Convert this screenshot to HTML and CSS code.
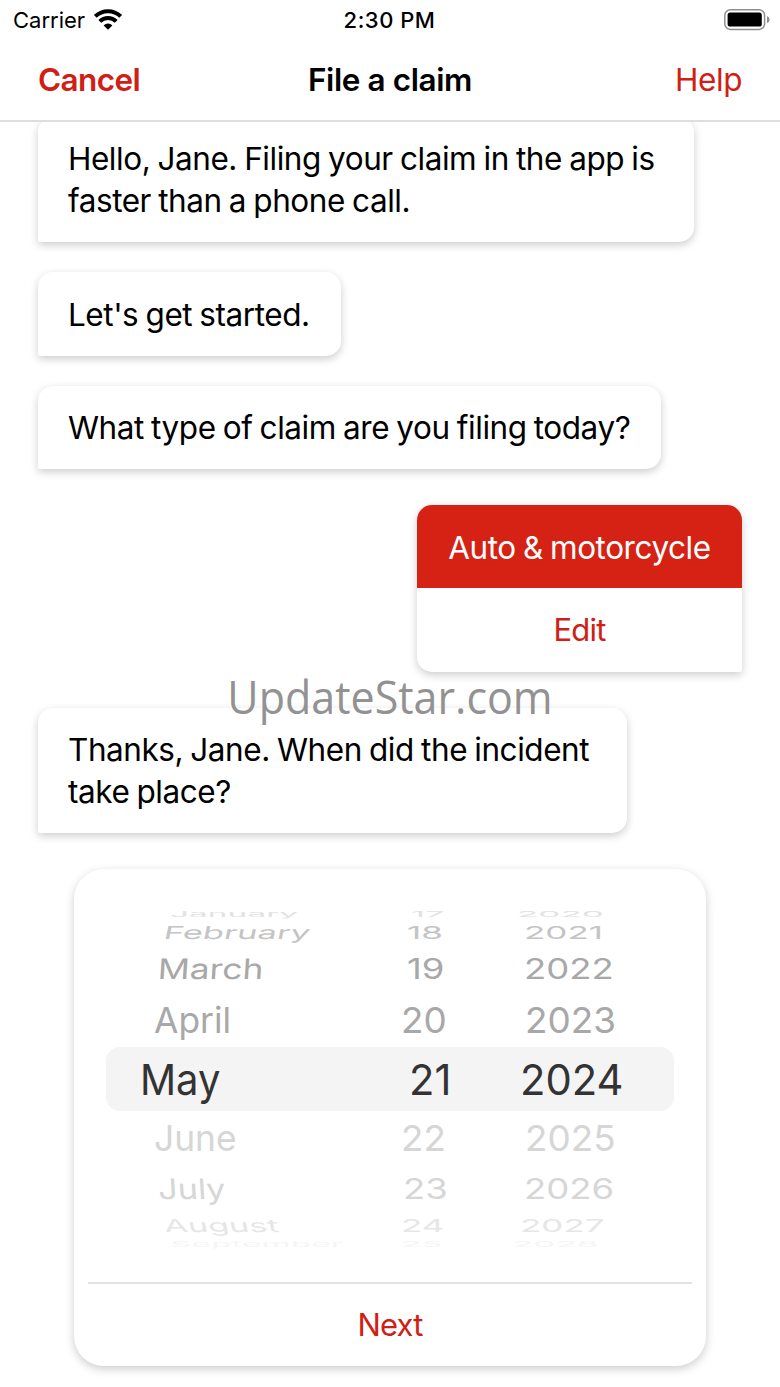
FILE: index.html
```html
<!DOCTYPE html>
<html lang="en">
  <head>
    <meta charset="utf-8">
    <title>File a claim</title>
    <link rel="stylesheet" href="styles.css">
  </head>
  <body>
    <header class="header">
      <div class="status-bar">
        <div class="carrier">
          <span>Carrier</span>
          <svg width="28" height="22" viewBox="0 0 28 22" fill="none" stroke="#000" stroke-width="4">
            <path d="M1.3 7.4A18 18 0 0 1 26.7 7.4" />
            <path d="M5.8 12.4A11.6 11.6 0 0 1 22.2 12.4" />
            <path d="M14 20.8l-4.4-4.4a6.2 6.2 0 0 1 8.8 0z" fill="#000" stroke="none" />
          </svg>
        </div>
        <div class="time">2:30 PM</div>
        <svg class="battery" width="46" height="22" viewBox="0 0 46 22">
          <rect x="0.8" y="0.8" width="39.8" height="19.6" rx="5.5" fill="#fff" stroke="#8e8e8e" stroke-width="1.5" />
          <rect x="3.6" y="3.6" width="34.2" height="14" rx="2.6" />
          <path d="M43 7q2.6 1 2.6 3.6T43 14.2z" fill="#8e8e8e" />
        </svg>
      </div>
      <nav class="nav">
        <a class="cancel">Cancel</a>
        <h1>File a claim</h1>
        <a class="help">Help</a>
      </nav>
    </header>

    <main class="chat">
      <div class="bubble greeting">Hello, Jane. Filing your claim in the app is faster than a phone call.</div>
      <div class="bubble">Let's get started.</div>
      <div class="bubble">What type of claim are you filing today?</div>

      <div class="answer">
        <div class="answer-text">Auto &amp; motorcycle</div>
        <a class="edit">Edit</a>
      </div>

      <div class="bubble question">Thanks, Jane. When did the incident take place?</div>

      <div class="picker">
        <div class="wheel">
          <div class="row up4"><span>January</span><span>17</span><span>2020</span></div>
          <div class="row up3"><span>February</span><span>18</span><span>2021</span></div>
          <div class="row up2"><span>March</span><span>19</span><span>2022</span></div>
          <div class="row up1"><span>April</span><span>20</span><span>2023</span></div>
          <div class="row selected"><span>May</span><span>21</span><span>2024</span></div>
          <div class="row down1"><span>June</span><span>22</span><span>2025</span></div>
          <div class="row down2"><span>July</span><span>23</span><span>2026</span></div>
          <div class="row down3"><span>August</span><span>24</span><span>2027</span></div>
          <div class="row down4"><span>September</span><span>25</span><span>2028</span></div>
        </div>
        <a class="next">Next</a>
      </div>
    </main>

    <div class="watermark">UpdateStar.com</div>
  </body>
</html>
```
FILE: styles.css
```css
* {
  box-sizing: border-box;
}

body {
  position: relative;
  width: 780px;
  height: 1387px;
  margin: 0;
  overflow: hidden;
  background-color: #fff;
  color: #000;
  font-family: Inter, "Liberation Sans", sans-serif;
  font-size: 31.5px;
  letter-spacing: -0.45px;
  word-spacing: -1.2px;
}

.header {
  position: relative;
  z-index: 1;
  height: 122px;
  border-bottom: 2px solid #dedede;
  background-color: #fff;
}

.status-bar {
  display: grid;
  grid-template-columns: 1fr auto 1fr;
  align-items: center;
  height: 39px;
  padding: 0 10px 0 13px;
  font-size: 22px;
  letter-spacing: 0;
  word-spacing: 0;
}

.carrier {
  display: flex;
  align-items: center;
  gap: 9px;
}

.time {
  margin-right: 4px;
  font-weight: 500;
  letter-spacing: 0.5px;
}

.battery {
  justify-self: end;
}

.nav {
  display: grid;
  grid-template-columns: 1fr auto 1fr;
  align-items: center;
  height: 80px;
  padding: 0 38px;
}

.nav h1 {
  margin: 0;
  font-size: 31.5px;
  font-weight: 600;
  letter-spacing: -0.4px;
  word-spacing: 0;
}

.cancel,
.help,
.edit,
.next {
  color: #d02015;
}

.cancel {
  font-weight: 600;
  letter-spacing: -0.6px;
}

.help {
  text-align: right;
}

.edit,
.next {
  display: block;
  font-size: 31px;
  letter-spacing: -0.8px;
}

.chat {
  display: flex;
  flex-direction: column;
  align-items: flex-start;
  margin-top: -5.5px;
  padding: 0 38px;
}

.bubble {
  margin-bottom: 30px;
  padding: 21.5px 31px 20px 30px;
  border-radius: 15px 15px 15px 2px;
  background-color: #fff;
  box-shadow: 0 3px 8px rgba(0, 0, 0, 0.2);
  line-height: 42px;
}

.greeting {
  width: 656px;
}

.question {
  width: 589px;
}

.answer {
  align-self: flex-end;
  width: 325px;
  margin: 6px 0 36px;
  border-radius: 15px 15px 2px 15px;
  overflow: hidden;
  background-color: #fff;
  box-shadow: 0 3px 8px rgba(0, 0, 0, 0.2);
  line-height: 83.25px;
  text-align: center;
}

.answer-text {
  padding-top: 1px;
  height: 83.25px;
  background-color: #d62214;
  color: #fff;
}

.picker {
  align-self: center;
  width: 632px;
  height: 497px;
  margin-top: 6px;
  padding: 40px 14px 0;
  border-radius: 30px;
  background-color: #fff;
  box-shadow: 0 3px 10px rgba(0, 0, 0, 0.2);
}

.wheel {
  height: 375px;
  border-bottom: 2px solid #e2e2e2;
  letter-spacing: 0;
}

.row {
  display: grid;
  margin: 0 18px;
  font-size: 38px;
}

.row span {
  justify-self: start;
  transform: scale(var(--sx, 0.97), var(--sy, 1)) skewX(var(--skew, 0deg));
  transform-origin: left center;
}

.row span:first-child {
  --sx: 0.93;
}

.selected {
  grid-template-columns: 269px 111px 1fr;
  padding-left: 34px;
  border-radius: 14px;
  background-color: #f4f4f4;
  color: #333;
  font-size: 43px;
  line-height: 64px;
}

.up1,
.down1 {
  --sy: 0.94;
  grid-template-columns: 247px 124px 1fr;
  padding-left: 48px;
  line-height: 54px;
}

.up2,
.down2 {
  --sy: 0.74;
  --sx: 0.96;
  grid-template-columns: 245px 121px 1fr;
  padding-left: 52px;
  line-height: 48px;
}

.up2 {
  grid-template-columns: 249px 117px 1fr;
}

.up2 span:first-child {
  --skew: -3deg;
}

.down2 span:first-child {
  --sx: 0.9;
  --skew: 3deg;
}

.up3,
.down3 {
  --sy: 0.47;
  --sx: 0.92;
  grid-template-columns: 243px 117px 1fr;
  padding-left: 58px;
}

.up3 span:first-child {
  --sx: 0.91;
  --skew: -6deg;
}

.down3 {
  grid-template-columns: 237px 119px 1fr;
}

.down3 span:first-child {
  --sx: 0.9;
  --skew: 6deg;
}

.up4,
.down4 {
  --sy: 0.2;
  --sx: 0.92;
  grid-template-columns: 241px 106px 1fr;
  padding-left: 64px;
}

.down4 {
  grid-template-columns: 230px 112px 1fr;
}

.up4 span:first-child,
.down4 span:first-child {
  --sx: 0.88;
}

.up1,
.up2 {
  color: #a8a8a8;
}

.up3 {
  color: #c4c4c4;
  line-height: 26px;
}

.up4 {
  color: #e2e2e2;
  line-height: 10px;
}

.down1,
.down2 {
  color: #d6d6d6;
}

.down3 {
  color: #e6e6e6;
  line-height: 24px;
}

.down4 {
  color: #f5f5f5;
  line-height: 14px;
}

.next {
  line-height: 81px;
  text-align: center;
}

.watermark {
  position: absolute;
  top: 664px;
  left: 0;
  width: 780px;
  color: #929292;
  font-family: "Open Sans", "Noto Sans", sans-serif;
  font-size: 46px;
  letter-spacing: 0;
  line-height: 64px;
  text-align: center;
  transform: scaleX(0.935);
}
```
